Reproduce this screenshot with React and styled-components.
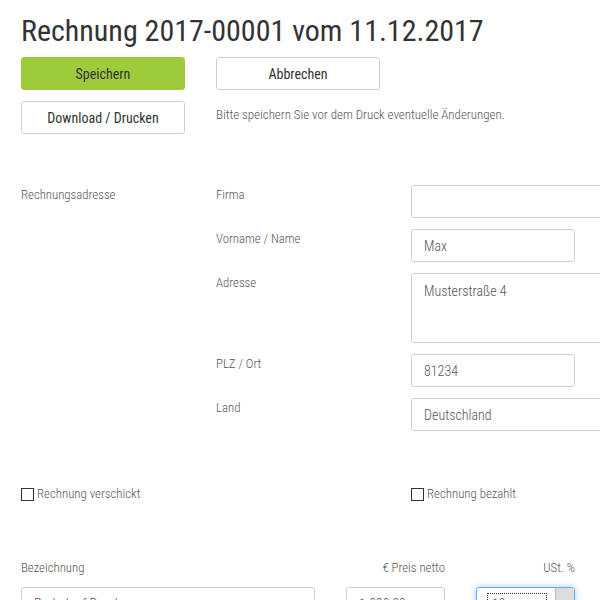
import React from 'react';
import styled, { createGlobalStyle } from 'styled-components';

const GlobalStyle = createGlobalStyle`
  html, body {
    margin: 0;
    padding: 0;
    background: #fff;
    overflow: hidden;
  }
  body {
    font-family: "Roboto Condensed", "Liberation Sans Narrow", "Roboto", sans-serif;
    color: #333;
    text-align: left;
  }
`;

const Page = styled.div`
  width: 900px;
  padding: 11px 0 0 21px;
  text-align: left;
`;

const Title = styled.h1`
  margin: 0;
  font-size: 30px;
  font-weight: 400;
  line-height: 40px;
  color: #333;
`;

const Row = styled.div`
  display: grid;
  grid-template-columns: repeat(4, 164px);
  column-gap: 31px;
  align-items: ${(p) => p.align || 'start'};
  margin-top: ${(p) => p.top || 0}px;
`;

const Button = styled.button`
  height: 33px;
  border-radius: 3px;
  font-family: inherit;
  font-size: 14px;
  color: #333;
  cursor: pointer;
  border: 1px solid ${(p) => (p.primary ? '#9ecb3c' : '#cfcfcf')};
  background: ${(p) => (p.primary ? '#9ecb3c' : '#fff')};
`;

const Hint = styled.div`
  grid-column: 2 / span 2;
  justify-self: start;
  text-align: left;
  font-size: 12.95px;
  font-weight: 300;
  line-height: 16px;
  color: #555;
  margin-top: -6px;
`;

const Label = styled.div`
  grid-column: ${(p) => p.col || 'auto'};
  font-size: 12.8px;
  font-weight: 300;
  line-height: 16px;
  color: #555;
  padding-top: 2px;
`;

const Input = styled.div`
  grid-column: ${(p) => p.col} / span ${(p) => p.span || 1};
  height: ${(p) => p.h || 33}px;
  box-sizing: border-box;
  border: 1px solid #cfcfcf;
  border-radius: 3px;
  padding: ${(p) => (p.multi ? '9px' : '0')} 12px 0;
  display: flex;
  align-items: ${(p) => (p.multi ? 'flex-start' : 'center')};
  font-size: 14px;
  font-weight: 300;
  color: #555;
  background: #fff;
`;

const FormBlock = styled.div`
  margin-top: 51px;
  display: flex;
  flex-direction: column;
  gap: 11px;
`;

const CheckRow = styled(Row)`
  margin-top: 55px;
`;

const Check = styled.label`
  grid-column: ${(p) => p.col};
  display: flex;
  align-items: center;
  gap: 3px;
  font-size: 12.85px;
  font-weight: 300;
  line-height: 16px;
  color: #555;
`;

const Box = styled.span`
  width: 11px;
  height: 11px;
  border: 1px solid #333;
  display: inline-block;
`;

const ItemsHead = styled.div`
  display: grid;
  grid-template-columns: 294px 99px 99px;
  column-gap: 31px;
  margin-top: 58px;
  font-size: 12.8px;
  font-weight: 300;
  line-height: 16px;
  color: #555;
`;

const HeadCell = styled.div`
  text-align: ${(p) => (p.right ? 'right' : 'left')};
`;

const ItemsRow = styled(ItemsHead)`
  margin-top: 11px;
  font-size: 14px;
`;

const Cell = styled.div`
  height: 33px;
  box-sizing: border-box;
  border: 1px solid #cfcfcf;
  border-radius: 3px;
  padding: 0 12px;
  display: flex;
  align-items: center;
  color: #555;
  overflow: hidden;
  white-space: nowrap;
`;

const Select = styled.div`
  height: 33px;
  box-sizing: border-box;
  border: 1px solid #66afe9;
  border-radius: 3px;
  box-shadow: 0 0 6px rgba(102, 175, 233, 0.6);
  display: flex;
  overflow: hidden;
`;

const SelectValue = styled.div`
  flex: 1;
  margin: 5px 8px 5px 10px;
  border: 1px dotted #333;
  padding-left: 4px;
  display: flex;
  align-items: center;
  color: #555;
`;

const SelectArrow = styled.div`
  width: 18px;
  background: #ddd;
  border-left: 1px solid #bbb;
`;

export default function App() {
  return (
    <>
      <GlobalStyle />
      <Page>
        <Title>Rechnung 2017-00001 vom 11.12.2017</Title>
        <Row top={6}>
          <Button primary>Speichern</Button>
          <Button>Abbrechen</Button>
        </Row>
        <Row top={11} align="center">
          <Button>Download / Drucken</Button>
          <Hint>Bitte speichern Sie vor dem Druck eventuelle Änderungen.</Hint>
        </Row>

        <FormBlock>
          <Row>
            <Label>Rechnungsadresse</Label>
            <Label>Firma</Label>
            <Input col={3} span={2} />
          </Row>
          <Row>
            <Label col={2}>Vorname / Name</Label>
            <Input col={3}>Max</Input>
          </Row>
          <Row>
            <Label col={2}>Adresse</Label>
            <Input col={3} span={2} h={70} multi>
              Musterstraße 4
            </Input>
          </Row>
          <Row>
            <Label col={2}>PLZ / Ort</Label>
            <Input col={3}>81234</Input>
          </Row>
          <Row>
            <Label col={2}>Land</Label>
            <Input col={3} span={2}>Deutschland</Input>
          </Row>
        </FormBlock>

        <CheckRow>
          <Check col={1}>
            <Box />
            Rechnung verschickt
          </Check>
          <Check col={3}>
            <Box />
            Rechnung bezahlt
          </Check>
        </CheckRow>

        <ItemsHead>
          <HeadCell>Bezeichnung</HeadCell>
          <HeadCell right>€ Preis netto</HeadCell>
          <HeadCell right>USt. %</HeadCell>
        </ItemsHead>
        <ItemsRow>
          <Cell>Probelauf Druck</Cell>
          <Cell>1.000,00</Cell>
          <Select>
            <SelectValue>19</SelectValue>
            <SelectArrow />
          </Select>
        </ItemsRow>
      </Page>
    </>
  );
}
